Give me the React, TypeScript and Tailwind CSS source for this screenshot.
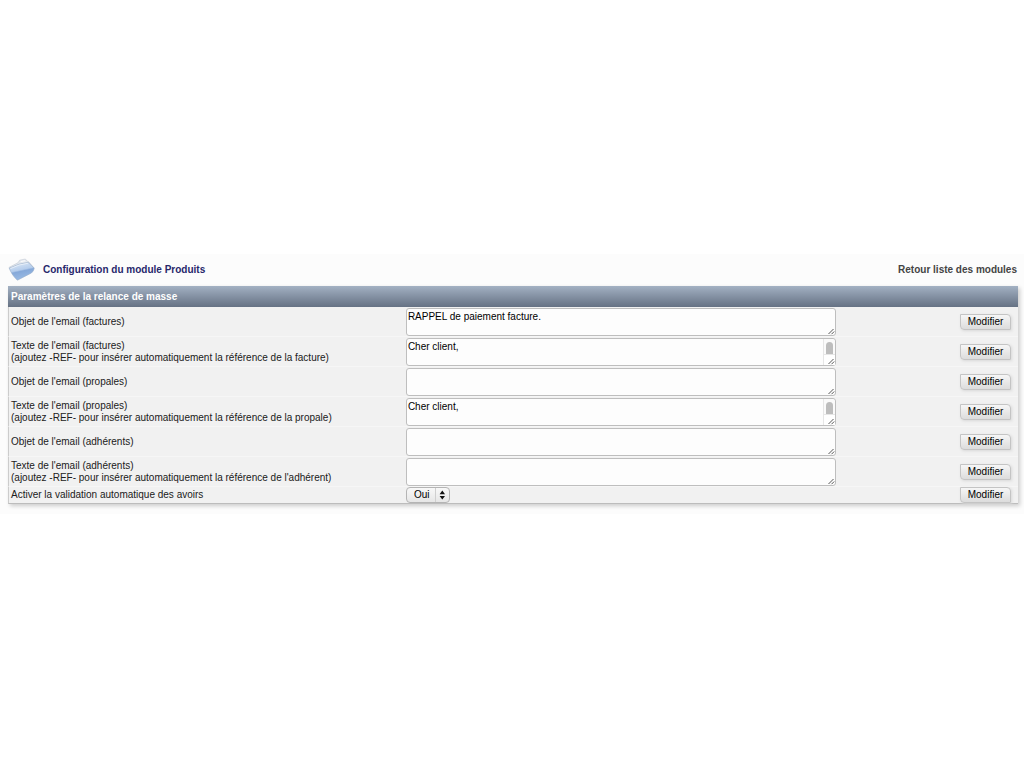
import { useState } from "react";

type Setting = {
  id: string;
  label: string;
  hint?: string;
  value: string;
  scroll?: boolean;
};

const SETTINGS: Setting[] = [
  { id: "objet-factures", label: "Objet de l'email (factures)", value: "RAPPEL de paiement facture." },
  {
    id: "texte-factures",
    label: "Texte de l'email (factures)",
    hint: "(ajoutez -REF- pour insérer automatiquement la référence de la facture)",
    value: "Cher client,",
    scroll: true,
  },
  { id: "objet-propales", label: "Objet de l'email (propales)", value: "" },
  {
    id: "texte-propales",
    label: "Texte de l'email (propales)",
    hint: "(ajoutez -REF- pour insérer automatiquement la référence de la propale)",
    value: "Cher client,",
    scroll: true,
  },
  { id: "objet-adherents", label: "Objet de l'email (adhérents)", value: "" },
  {
    id: "texte-adherents",
    label: "Texte de l'email (adhérents)",
    hint: "(ajoutez -REF- pour insérer automatiquement la référence de l'adhérent)",
    value: "",
  },
];

function FolderIcon() {
  return (
    <svg width="28" height="24" viewBox="0 0 28 24" aria-hidden="true">
      <defs>
        <linearGradient id="folder-front" x1="0.32" y1="0" x2="0.62" y2="1">
          <stop offset="0" stopColor="#dbe7f5" />
          <stop offset="0.42" stopColor="#b5cdec" />
          <stop offset="0.5" stopColor="#86a9d9" />
          <stop offset="1" stopColor="#9cbde6" />
        </linearGradient>
      </defs>
      <path d="M1 9.4 L10.2 4.6 L11.6 2.2 L17.4 1 L19 3 L21 4 L26.2 10 L9.4 20 Z" fill="#e3e8ee" stroke="#c3cad3" strokeWidth="0.6" />
      <path d="M12.4 4 L13 3 L16.6 2.2 L17.6 3.2 Z" fill="#fcfcfc" />
      <path d="M1.2 10.2 L11 6.2 L20.2 4.4 L26.2 10.2 C25.8 12.2 24.8 13.8 23.4 15 L9.4 22.2 C5.6 18.8 3 14.8 1.2 10.2 Z" fill="url(#folder-front)" stroke="#94abc9" strokeWidth="0.6" />
      <path d="M2.4 10.6 L11.2 7 L20 5.2" fill="none" stroke="#f4f8fc" strokeWidth="0.7" />
    </svg>
  );
}

// Diagonal hatch in the corner of every text box
function ResizeGrip() {
  return (
    <svg className="pointer-events-none absolute right-px bottom-px" width="7" height="7" viewBox="0 0 7 7" aria-hidden="true">
      <path d="M0.5 6 L5.5 1 M3.5 6.2 L6.2 3.5" stroke="#555555" strokeWidth="1" fill="none" />
    </svg>
  );
}

function ScrollTrack() {
  return (
    <span className="pointer-events-none absolute top-px right-px bottom-px flex w-3 flex-col items-center rounded-r-sm border-l border-[#e6e6e6] bg-[#fafafa] pt-[3px]">
      <span className="h-3 w-[7px] rounded-t-full bg-[#bdbdbd]" />
      <span className="w-full flex-1 border-t border-[#e6e6e6] bg-white" />
    </span>
  );
}

function ModifyButton() {
  return (
    <button
      type="submit"
      className="block h-4 w-[51px] rounded-tr-[4px] rounded-bl-[4px] border border-[#c4c4c4] bg-linear-to-b from-[#f6f6f6] to-[#dcdcdc] text-center leading-3 text-black shadow-[1px_1px_3px_#d8d8d8]"
    >
      Modifier
    </button>
  );
}

export default function App() {
  const [values, setValues] = useState<Record<string, string>>(
    Object.fromEntries(SETTINGS.map((s) => [s.id, s.value]))
  );
  const [autoValidate, setAutoValidate] = useState("1");

  return (
    <div className="flex min-h-screen flex-col justify-center bg-white font-['Liberation_Sans',Arial,sans-serif] text-[10px] leading-3 text-[#202020]">
      <main className="bg-[#fcfcfc] pr-[6px] pb-[10px] pl-2">
        <header className="flex h-8 items-center justify-between pr-px">
          <div className="flex items-center gap-[7px]">
            <FolderIcon />
            <h1 className="font-bold text-[#27276b]">Configuration du module Produits</h1>
          </div>
          <a href="#modules" className="font-bold text-[#444444]">
            Retour liste des modules
          </a>
        </header>

        <form onSubmit={(e) => e.preventDefault()}>
          <table className="w-full table-fixed border-separate border-spacing-0 bg-[#f1f1f1] shadow-[2px_2px_4px_#cccccc]">
            <colgroup>
              <col className="w-[39%]" />
              <col />
              <col className="w-[58px]" />
            </colgroup>
            <thead>
              <tr className="h-[21px] bg-linear-to-b from-[#a3b1c3] to-[#667284]">
                <th colSpan={3} className="px-[3px] py-0 text-left font-bold text-white">
                  Paramètres de la relance de masse
                </th>
              </tr>
            </thead>
            <tbody>
              {SETTINGS.map((s) => (
                <tr key={s.id} className="h-[30px]">
                  <td className="border-b border-l border-b-[#f6f6f6] border-l-[#cccccc] px-[2px] py-0">
                    <label htmlFor={s.id} className="block">
                      {s.label}
                      {s.hint && <span className="block">{s.hint}</span>}
                    </label>
                  </td>
                  <td className="border-b border-[#f6f6f6] px-1 py-0">
                    <div className="relative w-[430px] max-w-full">
                      <textarea
                        id={s.id}
                        value={values[s.id]}
                        onChange={(e) => setValues({ ...values, [s.id]: e.target.value })}
                        className="block h-7 w-full resize-none overflow-hidden rounded-[3px] border border-[#bebebe] bg-[#fdfdfd] px-px pt-[2px] text-black"
                      />
                      {s.scroll && <ScrollTrack />}
                      <ResizeGrip />
                    </div>
                  </td>
                  <td className="border-b border-[#f6f6f6] p-0">
                    <ModifyButton />
                  </td>
                </tr>
              ))}
              <tr className="h-[17px]">
                <td className="border-b border-l border-b-[#bcbcbc] border-l-[#cccccc] px-[2px] py-0">
                  <label htmlFor="validation-avoirs">Activer la validation automatique des avoirs</label>
                </td>
                <td className="border-b border-[#bcbcbc] px-1 py-0">
                  <div className="relative w-11">
                    <select
                      id="validation-avoirs"
                      value={autoValidate}
                      onChange={(e) => setAutoValidate(e.target.value)}
                      className="block h-4 w-full appearance-none rounded-[4px] border border-[#b4b4b4] bg-linear-to-b from-[#f8f8f8] to-[#e6e6e6] pl-[7px] text-black"
                    >
                      <option value="1">Oui</option>
                      <option value="0">Non</option>
                    </select>
                    <svg className="pointer-events-none absolute top-0 right-0" width="16" height="16" viewBox="0 0 16 16" aria-hidden="true">
                      <path d="M1.5 1 V15" stroke="#cfcfcf" />
                      <path d="M5.6 7.2 L8.3 3.6 L11 7.2 Z M5.6 9 L8.3 12.6 L11 9 Z" fill="#111111" />
                    </svg>
                  </div>
                </td>
                <td className="border-b border-[#bcbcbc] p-0">
                  <ModifyButton />
                </td>
              </tr>
            </tbody>
          </table>
        </form>
      </main>
    </div>
  );
}
